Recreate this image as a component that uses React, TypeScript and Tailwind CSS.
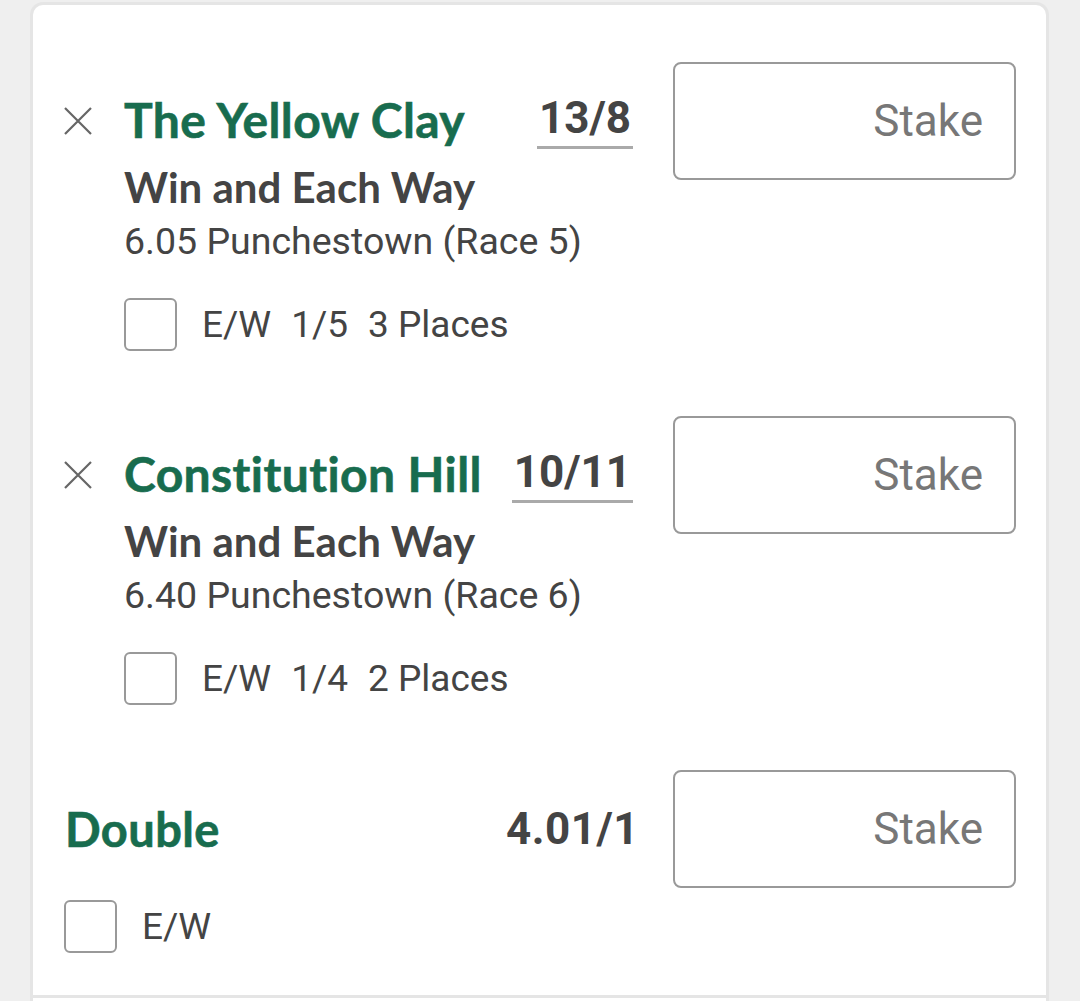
import React from "react";

type Selection = {
  name: string;
  odds: string;
  market: string;
  race: string;
  terms: string[];
};

const selections: Selection[] = [
  {
    name: "The Yellow Clay",
    odds: "13/8",
    market: "Win and Each Way",
    race: "6.05 Punchestown (Race 5)",
    terms: ["E/W", "1/5", "3 Places"],
  },
  {
    name: "Constitution Hill",
    odds: "10/11",
    market: "Win and Each Way",
    race: "6.40 Punchestown (Race 6)",
    terms: ["E/W", "1/4", "2 Places"],
  },
];

const lato = "font-['Lato','Noto_Sans',sans-serif]";
const roboto = "font-['Roboto','Liberation_Sans',sans-serif]";

function CloseIcon() {
  return (
    <svg width="28" height="28" viewBox="0 0 28 28" fill="none" className="shrink-0 mt-[3px]">
      <path d="M1 1L27 27M27 1L1 27" stroke="#666" strokeWidth="2.2" strokeLinecap="butt" />
    </svg>
  );
}

function StakeBox() {
  return (
    <input
      type="text"
      placeholder="Stake"
      className={`${roboto} w-[343px] h-[118px] shrink-0 rounded-[8px] border-2 border-[#999] bg-white pr-[31px] text-right text-[44px] text-[#444] placeholder:text-[#777] outline-none`}
    />
  );
}

function Checkbox() {
  return <div className="w-[53px] h-[53px] shrink-0 rounded-[6px] border-2 border-[#999] bg-white" />;
}

function SelectionRow({ s }: { s: Selection }) {
  return (
    <div className="flex items-start h-[354px]">
      <div className="w-[569px] pt-[28px]">
        <div className="flex items-center">
          <CloseIcon />
          <div
            className={`${lato} ml-[32px] flex-1 text-[48px] leading-[56px] font-bold tracking-[0.4px] text-[#186c4e] [-webkit-text-stroke:0.6px_#186c4e] whitespace-nowrap`}
          >
            {s.name}
          </div>
          <div
            className={`${roboto} text-[44px] leading-[56px] font-bold text-[#444] border-b-[3px] border-[#aaa] px-[2px]`}
          >
            {s.odds}
          </div>
        </div>
        <div className="pl-[60px]">
          <div className={`${lato} mt-[14px] text-[42px] leading-[48px] font-bold text-[#444]`}>{s.market}</div>
          <div className={`${roboto} mt-[8px] text-[37.5px] leading-[44px] text-[#444]`}>{s.race}</div>
          <div className="mt-[35px] flex items-center">
            <Checkbox />
            <div className={`${roboto} ml-[25px] flex gap-[20px] text-[37px] leading-[44px] text-[#444]`}>
              {s.terms.map((t) => (
                <span key={t}>{t}</span>
              ))}
            </div>
          </div>
        </div>
      </div>
      <div className="ml-[40px]">
        <StakeBox />
      </div>
    </div>
  );
}

export default function App() {
  return (
    <div className="min-h-screen bg-[#efefef] pt-[2px] overflow-hidden">
      <div className="ml-[30px] w-[1019px] min-h-[1010px] rounded-t-[13px] border-[3px] border-b-0 border-[#e5e5e5] bg-white">
        <div className="pl-[31px] pr-[30px] pt-[57px]">
          {selections.map((s) => (
            <SelectionRow key={s.name} s={s} />
          ))}

          <div className="flex items-center">
            <div className="w-[575px] flex items-center">
              <div
                className={`${lato} flex-1 pl-[1px] text-[47px] leading-[56px] font-bold tracking-[0.4px] text-[#186c4e] [-webkit-text-stroke:0.6px_#186c4e]`}
              >
                Double
              </div>
              <div className={`${roboto} text-[44px] leading-[56px] font-bold tracking-[0.5px] text-[#444]`}>4.01/1</div>
            </div>
            <div className="ml-[34px]">
              <StakeBox />
            </div>
          </div>
          <div className="mt-[12px] flex items-center">
            <Checkbox />
            <span className={`${roboto} ml-[25px] text-[37px] leading-[44px] text-[#444]`}>E/W</span>
          </div>
        </div>
        <div className="mt-[42px] h-[3px] bg-[#e5e5e5]" />
      </div>
    </div>
  );
}
